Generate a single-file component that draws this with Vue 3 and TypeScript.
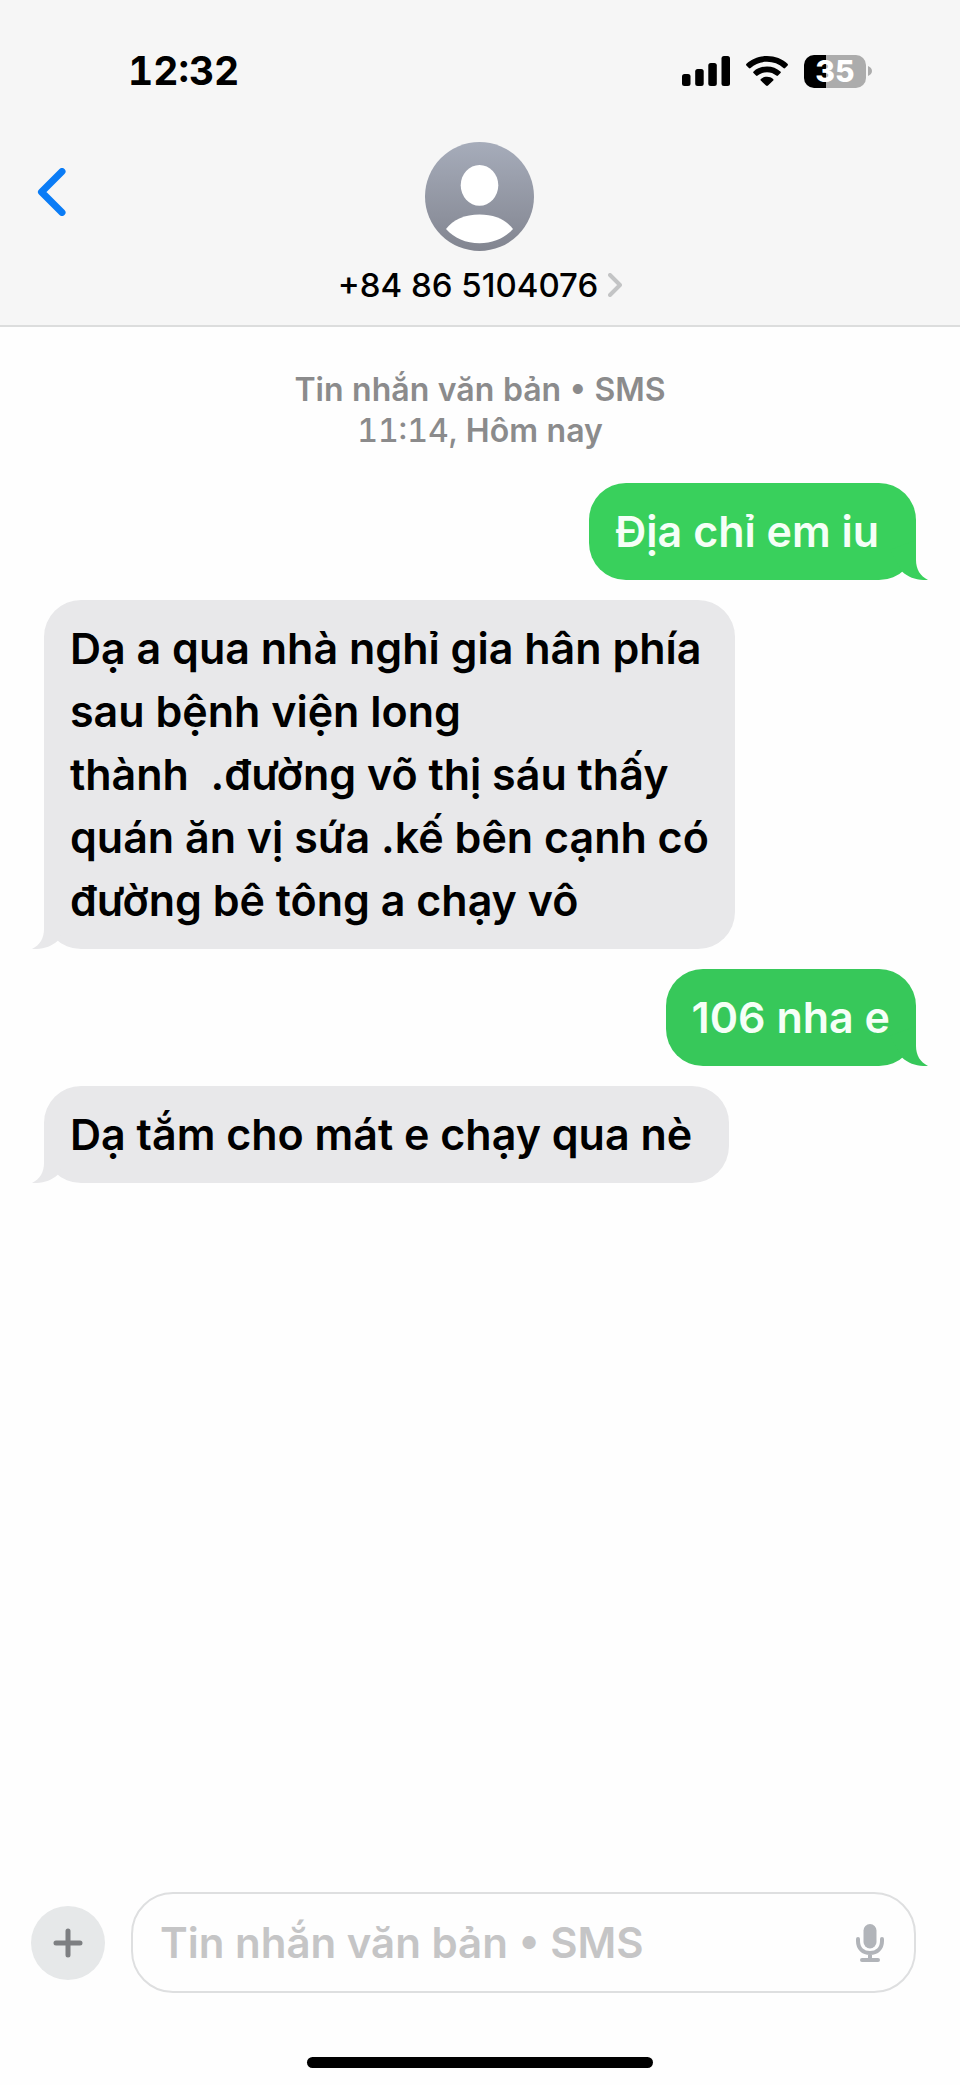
<script setup lang="ts">
import { ref } from 'vue'

interface Message {
  id: number
  side: 'sent' | 'received'
  shade: 'light' | 'deep' | 'grey'
  text: string
}

const draft = ref('')

const messages: Message[] = [
  { id: 1, side: 'sent', shade: 'light', text: 'Địa chỉ em iu\u00a0' },
  {
    id: 2,
    side: 'received',
    shade: 'grey',
    text:
      'Dạ a qua nhà nghỉ gia hân phía\n' +
      'sau bệnh viện long\n' +
      'thành  .đường võ thị sáu thấy\n' +
      'quán ăn vị sứa .kế bên cạnh có\n' +
      'đường bê tông a chạy vô',
  },
  { id: 3, side: 'sent', shade: 'deep', text: '106 nha e' },
  { id: 4, side: 'received', shade: 'grey', text: 'Dạ tắm cho mát e chạy qua nè\u00a0' },
]
</script>

<template>
  <div class="screen">
    <header class="header">
      <div class="status">
        <time class="clock">12:32</time>
        <div class="indicators">
          <svg class="signal" viewBox="0 0 48 30" aria-hidden="true">
            <rect x="0" y="18" width="8.5" height="12" rx="2.5" />
            <rect x="13.2" y="13" width="8.5" height="17" rx="2.5" />
            <rect x="26.3" y="7" width="8.5" height="23" rx="2.5" />
            <rect x="39.5" y="0" width="8.5" height="30" rx="2.5" />
          </svg>
          <svg class="wifi" viewBox="0 0 42 30" aria-hidden="true">
            <path d="M21 0C29.2 0 36.4 3 41.5 7.7C42.1 8.3 42.1 9 41.6 9.5L39.1 12C38.6 12.5 38 12.5 37.4 12C33 8 27.3 5.8 21 5.8S9 8 4.6 12C4 12.5 3.4 12.5 2.9 12L.4 9.5C-.1 9-.1 8.3.5 7.7C5.6 3 12.8 0 21 0Z" />
            <path d="M21 10.4C26.300 10.400 30.900 12.300 34.400 15.400C35 16 35 16.600 34.500 17.100L32 19.600C31.500 20.100 30.900 20 30.300 19.600C27.700 17.400 24.600 16.200 21 16.200S14.300 17.400 11.700 19.600C11.100 20 10.500 20.100 10 19.600L7.500 17.100C7 16.600 7 16 7.600 15.400C11.100 12.300 15.700 10.400 21 10.400Z" />
            <path d="M21 20.700C23.400 20.700 25.500 21.500 27.100 22.900C27.700 23.400 27.700 24 27.200 24.500L22 29.600C21.400 30.100 20.600 30.100 20 29.600L14.800 24.500C14.300 24 14.300 23.400 14.900 22.900C16.500 21.500 18.600 20.700 21 20.700Z" />
          </svg>
          <div class="battery">
            <span class="battery-body">35</span>
            <svg class="battery-nub" viewBox="0 0 4 10" aria-hidden="true">
              <path d="M0 0C2.500 1 4 2.800 4 5S2.500 9 0 10Z" />
            </svg>
          </div>
        </div>
      </div>

      <div class="nav">
        <button class="back" type="button" aria-label="Quay lại">
          <svg viewBox="0 0 30 48" aria-hidden="true">
            <path d="M25 3.500L4.500 24L25 44.500" />
          </svg>
        </button>
        <button class="contact" type="button">
          <svg class="avatar" viewBox="0 0 109 109" aria-hidden="true">
            <defs>
              <linearGradient id="avatar-fill" x1="0" y1="0" x2="0" y2="1">
                <stop offset="0" stop-color="#a6acba" />
                <stop offset="1" stop-color="#828590" />
              </linearGradient>
            </defs>
            <circle cx="54.500" cy="54.500" r="54.500" fill="url(#avatar-fill)" />
            <ellipse cx="54.500" cy="43.300" rx="18.800" ry="20.400" fill="#fff" />
            <path d="M21 87C28 77.500 40 72.500 54.500 72.500S81 77.500 88 87C80 96 68 101.300 54.500 101.300S29 96 21 87Z" fill="#fff" />
          </svg>
          <span class="contact-line">
            <span>+84 86 5104076</span>
            <svg class="disclosure" viewBox="0 0 14 24" aria-hidden="true">
              <path d="M2 2L12 12L2 22" />
            </svg>
          </span>
        </button>
      </div>
    </header>

    <main class="thread">
      <p class="stamp">
        <span class="stamp-strong">Tin nhắn văn bản • SMS</span><br />
        <span>11:14, </span><span class="stamp-strong">Hôm nay</span>
      </p>
      <div
        v-for="message in messages"
        :key="message.id"
        class="bubble"
        :class="[message.side, message.shade]"
      >
        <p class="bubble-text">{{ message.text }}</p>
        <svg class="tail" viewBox="0 0 38 40" aria-hidden="true">
          <path d="M26 0V20C26 29 30 36 38 40C28 40.500 19 38 12 31.500L0 10Z" />
        </svg>
      </div>
    </main>

    <footer class="footer">
      <form class="composer" @submit.prevent>
        <button class="add" type="button" aria-label="Thêm">
          <svg viewBox="0 0 30 30" aria-hidden="true">
            <path d="M15 3V27M3 15H27" />
          </svg>
        </button>
        <div class="field">
          <input
            v-model="draft"
            class="field-input"
            type="text"
            aria-label="Tin nhắn văn bản"
            placeholder="Tin nhắn văn bản • SMS"
          />
          <button class="mic" type="button" aria-label="Đọc chính tả">
            <svg viewBox="0 0 28 38" aria-hidden="true">
              <rect x="7.500" y="0" width="13" height="24.500" rx="6.500" fill="currentColor" />
              <path d="M2 15V17C2 24.500 7 29 14 29S26 24.500 26 17V15M14 29V36M6 36H22" fill="none" stroke="currentColor" stroke-width="4" stroke-linecap="round" />
            </svg>
          </button>
        </div>
      </form>
      <div class="home-bar"></div>
    </footer>
  </div>
</template>

<style>
body {
  margin: 0;
  background: #fefefe;
}
</style>

<style scoped>
.screen {
  display: flex;
  flex-direction: column;
  min-height: 100vh;
  background: #fefefe;
  color: #000;
  font-family: Inter, "Noto Sans", "Liberation Sans", sans-serif;
}

button {
  padding: 0;
  border: 0;
  background: none;
  color: inherit;
  font: inherit;
  cursor: pointer;
}

svg {
  display: block;
}

.header {
  padding-top: 40px;
  border-bottom: 2px solid #dcdddd;
  background: #f6f6f6;
}

.status {
  display: flex;
  align-items: center;
  justify-content: space-between;
  height: 62px;
  padding: 0 88px 0 128px;
}

.clock {
  font-size: 39px;
  font-variant-numeric: tabular-nums;
  font-weight: 700;
  line-height: 48px;
}

.indicators {
  display: flex;
  align-items: center;
  gap: 16px;
}

.signal {
  width: 48px;
  height: 30px;
}

.wifi {
  width: 42px;
  height: 30px;
}

.battery {
  display: flex;
  align-items: center;
  gap: 2px;
}

.battery-body {
  width: 62px;
  height: 33px;
  border-radius: 10px;
  background: linear-gradient(to right, #000 35%, #acacac 35%);
  color: #fff;
  font-size: 30px;
  font-weight: 800;
  line-height: 32px;
  text-align: center;
}

.battery-nub {
  width: 4px;
  height: 10px;
  fill: #acacac;
}

.nav {
  display: grid;
  grid-template-columns: 1fr auto 1fr;
  align-items: start;
  padding: 40px 37px 20px;
}

.back {
  display: flex;
  align-items: center;
  justify-self: start;
  width: 60px;
  height: 100px;
}

.back svg {
  width: 30px;
  height: 48px;
  fill: none;
  stroke: #0a7cf6;
  stroke-width: 7;
  stroke-linecap: round;
  stroke-linejoin: round;
}

.contact {
  display: flex;
  flex-direction: column;
  align-items: center;
  gap: 14px;
}

.avatar {
  width: 109px;
  height: 109px;
}

.contact-line {
  display: flex;
  align-items: center;
  gap: 10px;
  font-size: 33px;
  font-weight: 500;
  line-height: 40px;
}

.disclosure {
  width: 14px;
  height: 24px;
  fill: none;
  stroke: #c3c4c5;
  stroke-width: 4;
  stroke-linecap: round;
  stroke-linejoin: round;
}

.thread {
  display: flex;
  flex: 1;
  flex-direction: column;
  gap: 20px;
  padding: 42px 44px;
}

.stamp {
  margin: 0 0 12px;
  color: #8b8b8c;
  font-size: 32px;
  font-variant-numeric: tabular-nums;
  font-weight: 500;
  line-height: 41px;
  text-align: center;
}

.stamp-strong {
  font-weight: 600;
}

.bubble {
  position: relative;
  max-width: 84%;
  padding: 17px 26px;
  border-radius: 37px;
}

.sent {
  align-self: flex-end;
  color: #f5fff7;
}

.received {
  align-self: flex-start;
}

.light {
  background: #39d05c;
  fill: #39d05c;
}

.deep {
  background: #37c85a;
  fill: #37c85a;
}

.grey {
  background: #e8e8ea;
  fill: #e8e8ea;
}

.bubble-text {
  margin: 0;
  font-size: 43px;
  font-weight: 600;
  line-height: 63px;
  white-space: pre-wrap;
}

.tail {
  position: absolute;
  right: -12px;
  bottom: 0;
  width: 38px;
  height: 40px;
}

.received .tail {
  right: auto;
  left: -12px;
  transform: scaleX(-1);
}

.footer {
  display: flex;
  flex-direction: column;
  align-items: center;
  gap: 64px;
  padding-bottom: 17px;
}

.composer {
  display: flex;
  align-items: center;
  gap: 26px;
  box-sizing: border-box;
  width: 100%;
  padding: 0 44px 0 31px;
}

.add {
  display: grid;
  flex: none;
  place-items: center;
  width: 74px;
  height: 74px;
  border-radius: 50%;
  background: #e6e8e9;
}

.add svg {
  width: 30px;
  height: 30px;
  fill: none;
  stroke: #7d7f82;
  stroke-width: 5;
  stroke-linecap: round;
}

.field {
  display: flex;
  flex: 1;
  align-items: center;
  box-sizing: border-box;
  min-width: 0;
  height: 101px;
  padding: 0 30px 0 27px;
  border: 2px solid #dedfe0;
  border-radius: 42px;
}

.field-input {
  flex: 1;
  min-width: 0;
  height: 64px;
  padding: 0;
  border: 0;
  outline: 0;
  background: none;
  color: #000;
  font: inherit;
  font-size: 42px;
  font-weight: 600;
}

.field-input::placeholder {
  color: #c5c5c6;
  opacity: 1;
}

.mic {
  color: #b1b4b9;
}

.mic svg {
  width: 28px;
  height: 38px;
}

.home-bar {
  width: 36%;
  height: 11px;
  border-radius: 6px;
  background: #000;
}
</style>
